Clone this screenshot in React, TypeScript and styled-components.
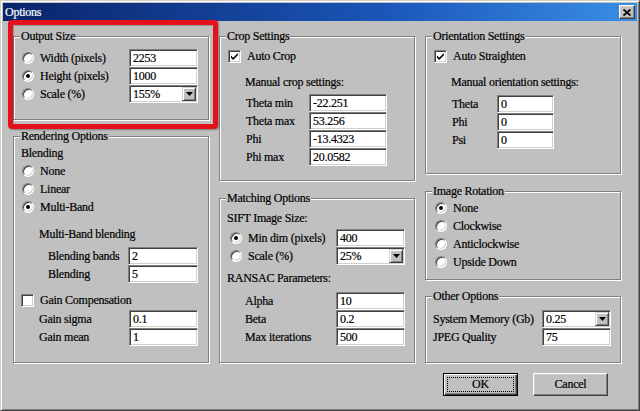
import React from "react";
import styled, { createGlobalStyle } from "styled-components";

const Global = createGlobalStyle`
  html, body { margin: 0; padding: 0; background: #c0c0c0; }
  * { box-sizing: border-box; }
  body { font-family: "Liberation Serif", "Times New Roman", serif; font-size: 12px; }
`;

const Window = styled.div`
  position: relative;
  width: 640px;
  height: 411px;
  background: #c0c0c0;
  border: 1px solid;
  border-color: #d4d0c8 #404040 #404040 #d4d0c8;
  box-shadow: inset 1px 1px 0 #fff, inset -1px -1px 0 #808080;
  padding: 2px;
  display: flex;
  flex-direction: column;
  font-family: "Liberation Serif", "Times New Roman", serif;
  font-size: 12px;
  letter-spacing: -0.25px;
  color: #000;
  -webkit-text-stroke: 0.2px currentColor;
`;

const TitleBar = styled.div`
  height: 18px;
  display: flex;
  align-items: center;
  justify-content: space-between;
  padding: 0 2px 0 2px;
  background: linear-gradient(90deg, #0a246a 0%, #1a56b8 60%, #3a8ee6 100%);
  color: #fff;
  font-size: 12px;
`;

const CloseButton = styled.div`
  width: 16px;
  height: 14px;
  background: #c0c0c0;
  border: 1px solid;
  border-color: #fff #404040 #404040 #fff;
  box-shadow: inset -1px -1px 0 #808080, inset 1px 1px 0 #d4d0c8;
  display: flex;
  align-items: center;
  justify-content: center;
`;

const Body = styled.div`
  flex: 1;
  display: flex;
  flex-direction: column;
  padding: 15px 29px 0 10px;
`;

const Columns = styled.div`
  display: grid;
  grid-template-columns: repeat(3, 196px);
  column-gap: 10px;
`;

const Column = styled.div`
  display: flex;
  flex-direction: column;
`;

const Group = styled.div<{ $h: number; $pt: number; $mt?: number }>`
  position: relative;
  height: ${(p) => p.$h}px;
  margin-top: ${(p) => p.$mt ?? 0}px;
  border: 1px solid #808080;
  box-shadow: inset 1px 1px 0 #fff, 1px 1px 0 #fff;
  padding: ${(p) => p.$pt}px 8px 0 8px;
  display: flex;
  flex-direction: column;
`;

const Legend = styled.span`
  position: absolute;
  top: -8px;
  left: 6px;
  padding: 0 1px;
  background: #c0c0c0;
  line-height: 14px;
  white-space: nowrap;
`;

const Row = styled.div<{ $ml?: number; $mt?: number }>`
  display: flex;
  align-items: center;
  gap: 6px;
  height: 18px;
  margin-left: ${(p) => p.$ml ?? 0}px;
  margin-top: ${(p) => p.$mt ?? 0}px;
  white-space: nowrap;
`;

const FieldRow = styled.div<{ $lw: number; $iw: number; $ml?: number; $mt?: number }>`
  display: grid;
  grid-template-columns: ${(p) => p.$lw}px ${(p) => p.$iw}px;
  align-items: center;
  height: 18px;
  margin-left: ${(p) => p.$ml ?? 0}px;
  margin-top: ${(p) => p.$mt ?? 0}px;
  white-space: nowrap;
`;

const Choice = styled.div`
  display: flex;
  align-items: center;
  gap: 6px;
`;

const RadioCircle = styled.span<{ $on?: boolean }>`
  position: relative;
  width: 12px;
  height: 12px;
  flex: none;
  border-radius: 50%;
  background: #fff;
  border: 1px solid;
  border-color: #808080 #fff #fff #808080;
  box-shadow: inset 1px 1px 0 #404040, inset -1px -1px 0 #d4d0c8;
  &::after {
    content: "";
    display: ${(p) => (p.$on ? "block" : "none")};
    position: absolute;
    left: 3px;
    top: 3px;
    width: 4px;
    height: 4px;
    border-radius: 50%;
    background: #000;
  }
`;

const CheckBox = styled.span`
  width: 13px;
  height: 13px;
  flex: none;
  background: #fff;
  border: 1px solid;
  border-color: #808080 #fff #fff #808080;
  box-shadow: inset 1px 1px 0 #404040, inset -1px -1px 0 #d4d0c8;
  display: flex;
`;

const TextBox = styled.div`
  height: 18px;
  background: #fff;
  border: 1px solid;
  border-color: #808080 #fff #fff #808080;
  box-shadow: inset 1px 1px 0 #404040, inset -1px -1px 0 #d4d0c8;
  padding: 0 0 0 3px;
  display: flex;
  align-items: center;
`;

const SelectBox = styled(TextBox)`
  padding: 1px 1px 1px 3px;
  justify-content: space-between;
`;

const DropButton = styled.span`
  width: 14px;
  height: 14px;
  background: #c0c0c0;
  border: 1px solid;
  border-color: #d4d0c8 #404040 #404040 #d4d0c8;
  box-shadow: inset 1px 1px 0 #fff, inset -1px -1px 0 #808080;
  display: flex;
  align-items: center;
  justify-content: center;
`;

const ButtonRow = styled.div`
  display: flex;
  justify-content: flex-end;
  gap: 15px;
  margin-top: 10px;
`;

const Button = styled.div<{ $default?: boolean }>`
  width: 75px;
  height: 23px;
  display: flex;
  align-items: center;
  justify-content: center;
  background: #c0c0c0;
  padding: 3px;
  border: 1px solid;
  border-color: ${(p) => (p.$default ? "#000" : "#fff #404040 #404040 #fff")};
  box-shadow: ${(p) =>
    p.$default
      ? "inset 1px 1px 0 #fff, inset -1px -1px 0 #404040, inset -2px -2px 0 #808080"
      : "inset -1px -1px 0 #808080, inset 1px 1px 0 #d4d0c8"};
`;

const FocusRect = styled.span<{ $show?: boolean }>`
  flex: 1;
  align-self: stretch;
  display: flex;
  align-items: center;
  justify-content: center;
  border: 1px dotted ${(p) => (p.$show ? "#000" : "transparent")};
`;

const Highlight = styled.div`
  position: absolute;
  left: 7px;
  top: 19px;
  width: 210px;
  height: 109px;
  border: 5px solid #e4111b;
  border-radius: 4px;
  box-shadow: 1px 1px 2px rgba(0, 0, 0, 0.35), inset 1px 1px 1px rgba(0, 0, 0, 0.2);
  pointer-events: none;
`;

const Check = () => (
  <svg width="11" height="11" viewBox="0 0 11 11">
    <path d="M2 4.5 L4.2 6.7 L8.8 2.1 L8.8 4.3 L4.2 8.9 L2 6.7 Z" fill="#000" />
  </svg>
);

const Arrow = () => (
  <svg width="7" height="4" viewBox="0 0 7 4">
    <path d="M0 0 H7 L3.5 4 Z" fill="#000" />
  </svg>
);

const XGlyph = () => (
  <svg width="8" height="7" viewBox="0 0 8 7">
    <path d="M0.5 0.5 L7.5 6.5 M7.5 0.5 L0.5 6.5" stroke="#000" strokeWidth="1.7" />
  </svg>
);

const Radio = ({ on, label }: { on?: boolean; label: string }) => (
  <Choice>
    <RadioCircle $on={on} />
    <span>{label}</span>
  </Choice>
);

const Checked = ({ on, label }: { on?: boolean; label: string }) => (
  <Row>
    <CheckBox>{on && <Check />}</CheckBox>
    <span>{label}</span>
  </Row>
);

const Select = ({ value }: { value: string }) => (
  <SelectBox>
    <span>{value}</span>
    <DropButton>
      <Arrow />
    </DropButton>
  </SelectBox>
);

export default function App() {
  return (
    <>
      <Global />
      <Window>
        <TitleBar>
          <span>Options</span>
          <CloseButton>
            <XGlyph />
          </CloseButton>
        </TitleBar>
        <Body>
          <Columns>
            <Column>
              <Group $h={84} $pt={12}>
                <Legend>Output Size</Legend>
                <FieldRow $lw={107} $iw={69}>
                  <Radio label="Width (pixels)" />
                  <TextBox>2253</TextBox>
                </FieldRow>
                <FieldRow $lw={107} $iw={69}>
                  <Radio on label="Height (pixels)" />
                  <TextBox>1000</TextBox>
                </FieldRow>
                <FieldRow $lw={107} $iw={69}>
                  <Radio label="Scale (%)" />
                  <Select value="155%" />
                </FieldRow>
              </Group>
              <Group $h={227} $pt={7} $mt={16}>
                <Legend>Rendering Options</Legend>
                <Row $ml={-1}>Blending</Row>
                <Row>
                  <Radio label="None" />
                </Row>
                <Row>
                  <Radio label="Linear" />
                </Row>
                <Row>
                  <Radio on label="Multi-Band" />
                </Row>
                <Row $ml={17} $mt={9}>
                  Multi-Band blending
                </Row>
                <FieldRow $lw={80} $iw={70} $ml={26} $mt={4}>
                  <span>Blending bands</span>
                  <TextBox>2</TextBox>
                </FieldRow>
                <FieldRow $lw={80} $iw={70} $ml={26}>
                  <span>Blending</span>
                  <TextBox>5</TextBox>
                </FieldRow>
                <Row $ml={-1} $mt={8}>
                  <CheckBox />
                  <span>Gain Compensation</span>
                </Row>
                <FieldRow $lw={90} $iw={69} $ml={17} $mt={1}>
                  <span>Gain sigma</span>
                  <TextBox>0.1</TextBox>
                </FieldRow>
                <FieldRow $lw={90} $iw={69} $ml={17}>
                  <span>Gain mean</span>
                  <TextBox>1</TextBox>
                </FieldRow>
              </Group>
            </Column>

            <Column>
              <Group $h={145} $pt={10}>
                <Legend>Crop Settings</Legend>
                <Checked on label="Auto Crop" />
                <Row $ml={17} $mt={8}>
                  Manual crop settings:
                </Row>
                <FieldRow $lw={63} $iw={78} $ml={18} $mt={3}>
                  <span>Theta min</span>
                  <TextBox>-22.251</TextBox>
                </FieldRow>
                <FieldRow $lw={63} $iw={78} $ml={18}>
                  <span>Theta max</span>
                  <TextBox>53.256</TextBox>
                </FieldRow>
                <FieldRow $lw={63} $iw={78} $ml={18}>
                  <span>Phi</span>
                  <TextBox>-13.4323</TextBox>
                </FieldRow>
                <FieldRow $lw={63} $iw={78} $ml={18}>
                  <span>Phi max</span>
                  <TextBox>20.0582</TextBox>
                </FieldRow>
              </Group>
              <Group $h={165} $pt={10} $mt={17}>
                <Legend>Matching Options</Legend>
                <Row $ml={-1}>SIFT Image Size:</Row>
                <FieldRow $lw={106} $iw={69} $ml={2} $mt={2}>
                  <Radio on label="Min dim (pixels)" />
                  <TextBox>400</TextBox>
                </FieldRow>
                <FieldRow $lw={106} $iw={69} $ml={2}>
                  <Radio label="Scale (%)" />
                  <Select value="25%" />
                </FieldRow>
                <Row $ml={-1} $mt={4}>
                  RANSAC Parameters:
                </Row>
                <FieldRow $lw={91} $iw={69} $ml={17} $mt={5}>
                  <span>Alpha</span>
                  <TextBox>10</TextBox>
                </FieldRow>
                <FieldRow $lw={91} $iw={69} $ml={17}>
                  <span>Beta</span>
                  <TextBox>0.2</TextBox>
                </FieldRow>
                <FieldRow $lw={91} $iw={69} $ml={17}>
                  <span>Max iterations</span>
                  <TextBox>500</TextBox>
                </FieldRow>
              </Group>
            </Column>

            <Column>
              <Group $h={138} $pt={10}>
                <Legend>Orientation Settings</Legend>
                <Checked on label="Auto Straighten" />
                <Row $ml={17} $mt={8}>
                  Manual orientation settings:
                </Row>
                <FieldRow $lw={45} $iw={57} $ml={18} $mt={4}>
                  <span>Theta</span>
                  <TextBox>0</TextBox>
                </FieldRow>
                <FieldRow $lw={45} $iw={57} $ml={18}>
                  <span>Phi</span>
                  <TextBox>0</TextBox>
                </FieldRow>
                <FieldRow $lw={45} $iw={57} $ml={18}>
                  <span>Psi</span>
                  <TextBox>0</TextBox>
                </FieldRow>
              </Group>
              <Group $h={89} $pt={7} $mt={17}>
                <Legend>Image Rotation</Legend>
                <Row $ml={1}>
                  <Radio on label="None" />
                </Row>
                <Row $ml={1}>
                  <Radio label="Clockwise" />
                </Row>
                <Row $ml={1}>
                  <Radio label="Anticlockwise" />
                </Row>
                <Row $ml={1}>
                  <Radio label="Upside Down" />
                </Row>
              </Group>
              <Group $h={67} $pt={13} $mt={16}>
                <Legend>Other Options</Legend>
                <FieldRow $lw={109} $iw={69} $ml={-1}>
                  <span>System Memory (Gb)</span>
                  <Select value="0.25" />
                </FieldRow>
                <FieldRow $lw={109} $iw={69} $ml={-1}>
                  <span>JPEG Quality</span>
                  <TextBox>75</TextBox>
                </FieldRow>
              </Group>
            </Column>
          </Columns>
          <ButtonRow>
            <Button $default>
              <FocusRect $show>OK</FocusRect>
            </Button>
            <Button>
              <FocusRect>Cancel</FocusRect>
            </Button>
          </ButtonRow>
        </Body>
        <Highlight />
      </Window>
    </>
  );
}
